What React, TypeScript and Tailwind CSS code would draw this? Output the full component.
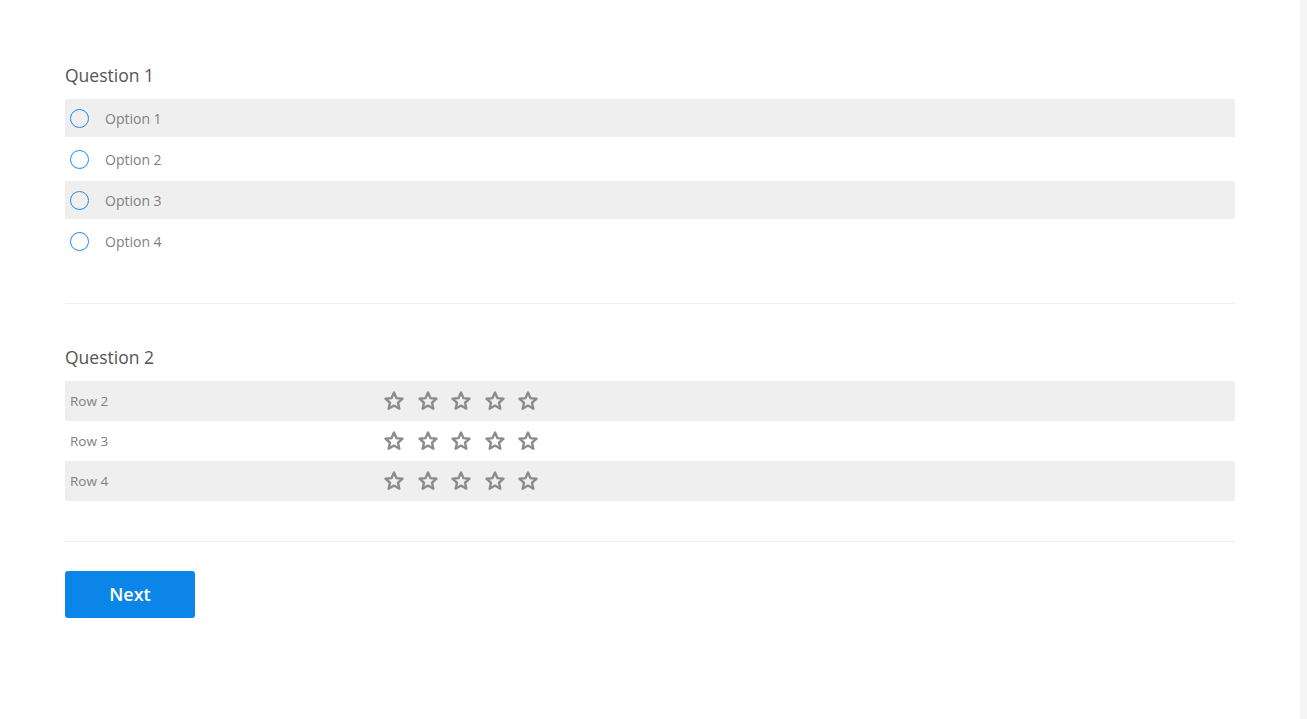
import React from 'react'

const options = ['Option 1', 'Option 2', 'Option 3', 'Option 4']
const rows = ['Row 2', 'Row 3', 'Row 4']

function Star() {
  return (
    <svg width="22" height="22" viewBox="0 0 24 24" fill="none" stroke="#8c8c8c" strokeWidth="2.6" strokeLinejoin="round">
      <path d="M12 2.8l2.75 6.1 6.6.6-5 4.4 1.5 6.5L12 17l-5.85 3.4 1.5-6.5-5-4.4 6.6-.6z" />
    </svg>
  )
}

export default function App() {
  return (
    <div className="flex min-h-[719px] bg-white font-['Open_Sans',sans-serif]">
      <div className="flex-1 px-[65px] pt-[62px]">
        <div className="w-[1170px]">
          <h2 className="text-[17.5px] leading-[26px] text-[#555]">Question 1</h2>
          <div className="mt-[11px] flex flex-col gap-[3px]">
            {options.map((o, i) => (
              <label
                key={o}
                className={`flex h-[38px] items-center ${i % 2 === 0 ? 'bg-[#efefef]' : ''}`}
              >
                <span className="ml-[5px] h-[19px] w-[19px] rounded-full border-[1.6px] border-[#1f8be6]" />
                <span className="ml-[16px] text-[14px] text-[#808080]">{o}</span>
              </label>
            ))}
          </div>

          <div className="mt-[43px] border-t border-[#eeeeee]" />

          <h2 className="mt-[40px] text-[17.5px] leading-[26px] text-[#555]">Question 2</h2>
          <div className="mt-[11px] flex flex-col">
            {rows.map((r, i) => (
              <div
                key={r}
                className={`flex h-[40px] items-center ${i % 2 === 0 ? 'bg-[#efefef]' : ''}`}
              >
                <span className="ml-[5px] w-[313px] text-[13.5px] text-[#808080]">{r}</span>
                <div className="flex gap-[11.5px]">
                  {[0, 1, 2, 3, 4].map((s) => (
                    <Star key={s} />
                  ))}
                </div>
              </div>
            ))}
          </div>

          <div className="mt-[40px] border-t border-[#eeeeee]" />

          <button className="mt-[29px] h-[47px] w-[130px] rounded-[3px] bg-[#0b86e8] text-[18px] font-semibold text-white">
            Next
          </button>
        </div>
      </div>
      <div className="w-[7px] bg-[#f5f5f5]" />
    </div>
  )
}
